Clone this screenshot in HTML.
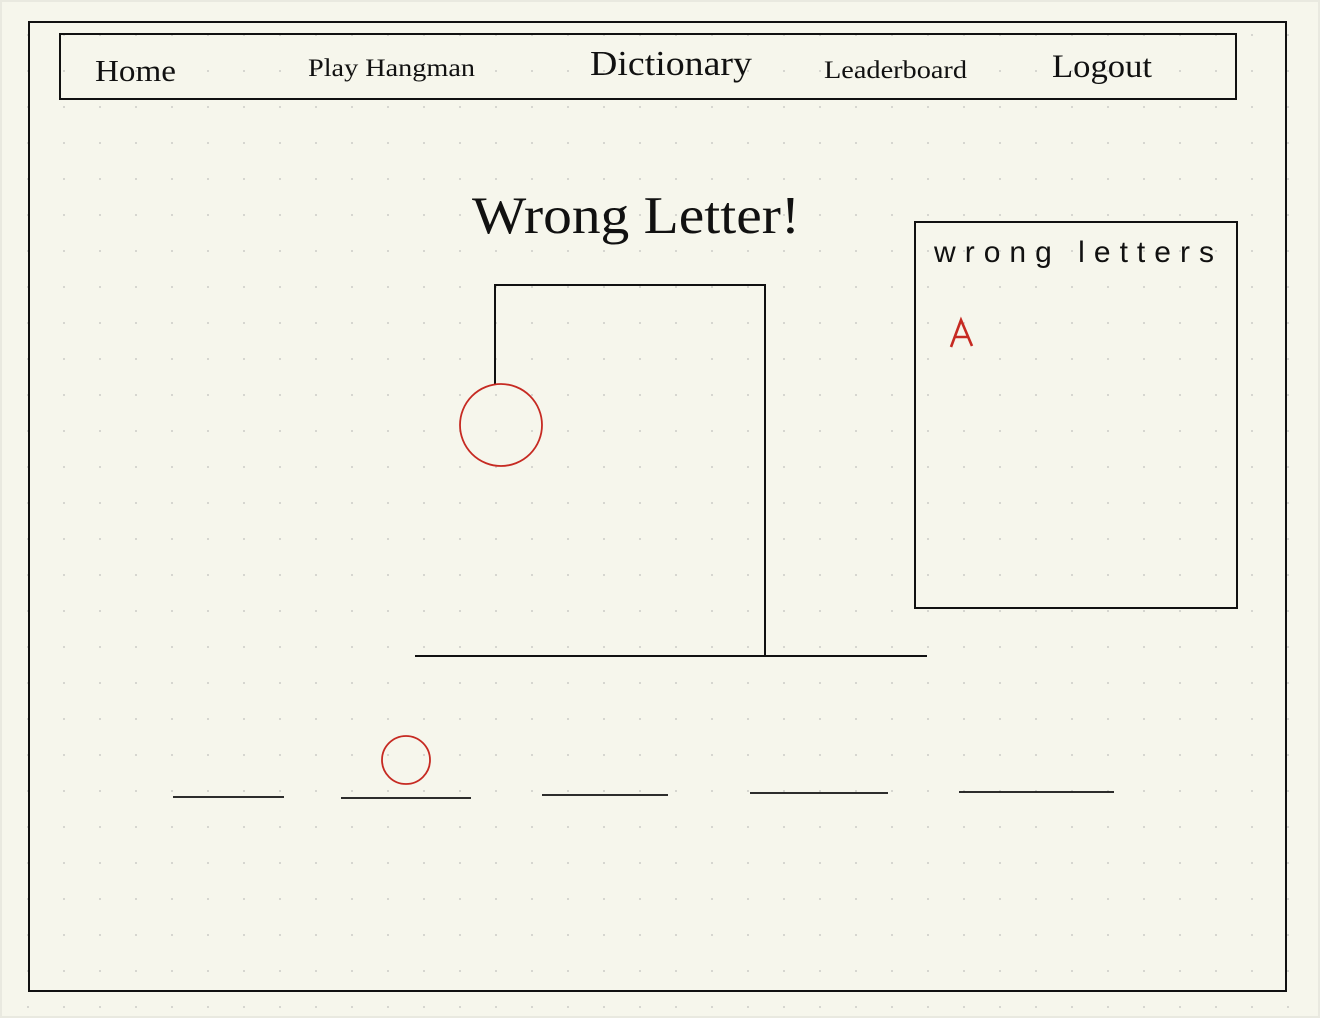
<!DOCTYPE html>
<html><head><meta charset="utf-8"><style>
html,body{margin:0;padding:0;background:#f6f6ec;}
svg{display:block}
</style></head><body>
<svg width="1320" height="1018" xmlns="http://www.w3.org/2000/svg">
<defs><pattern id="d" x="27" y="34" width="36" height="36" patternUnits="userSpaceOnUse"><rect x="0" y="0" width="2" height="2" fill="#d6d6d0"/></pattern></defs>
<rect width="1320" height="1018" fill="#e9e9e0"/>
<rect x="2" y="2" width="1316" height="1014" fill="#f6f6ec"/>
<rect x="2" y="2" width="1316" height="1014" fill="url(#d)"/>
<g fill="none" stroke="#111" stroke-width="2">
<rect x="29" y="22" width="1257" height="969"/>
<rect x="60" y="34" width="1176" height="65"/>
<rect x="915" y="222" width="322" height="386"/>
<path d="M495 385V285H765V656M415 656H927"/>
<path d="M173 797H284M341 798H471M542 795H668M750 793H888M959 792H1114" stroke-width="1.8"/>
</g>
<g fill="none" stroke="#c62a22" stroke-width="1.8">
<circle cx="501" cy="425" r="41"/>
<circle cx="406" cy="760" r="24"/>
<path d="M951 347L961 320L972 346M954 337H969" stroke-width="2.6"/>
</g>
<g font-family="Liberation Serif, serif" fill="#111">
<text x="95" y="81" font-size="31" textLength="81" lengthAdjust="spacingAndGlyphs">Home</text>
<text x="308" y="76" font-size="25" textLength="167" lengthAdjust="spacingAndGlyphs">Play Hangman</text>
<text x="590" y="75" font-size="35" textLength="162" lengthAdjust="spacingAndGlyphs">Dictionary</text>
<text x="824" y="78" font-size="25" textLength="143" lengthAdjust="spacingAndGlyphs">Leaderboard</text>
<text x="1052" y="77" font-size="33" textLength="100" lengthAdjust="spacingAndGlyphs">Logout</text>
<text x="472" y="233" font-size="53" textLength="328" lengthAdjust="spacingAndGlyphs">Wrong Letter!</text>
<text x="934" y="262" font-size="30" font-family="Liberation Sans, sans-serif" textLength="280" lengthAdjust="spacing">wrong letters</text>
</g>
</svg>
</body></html>
